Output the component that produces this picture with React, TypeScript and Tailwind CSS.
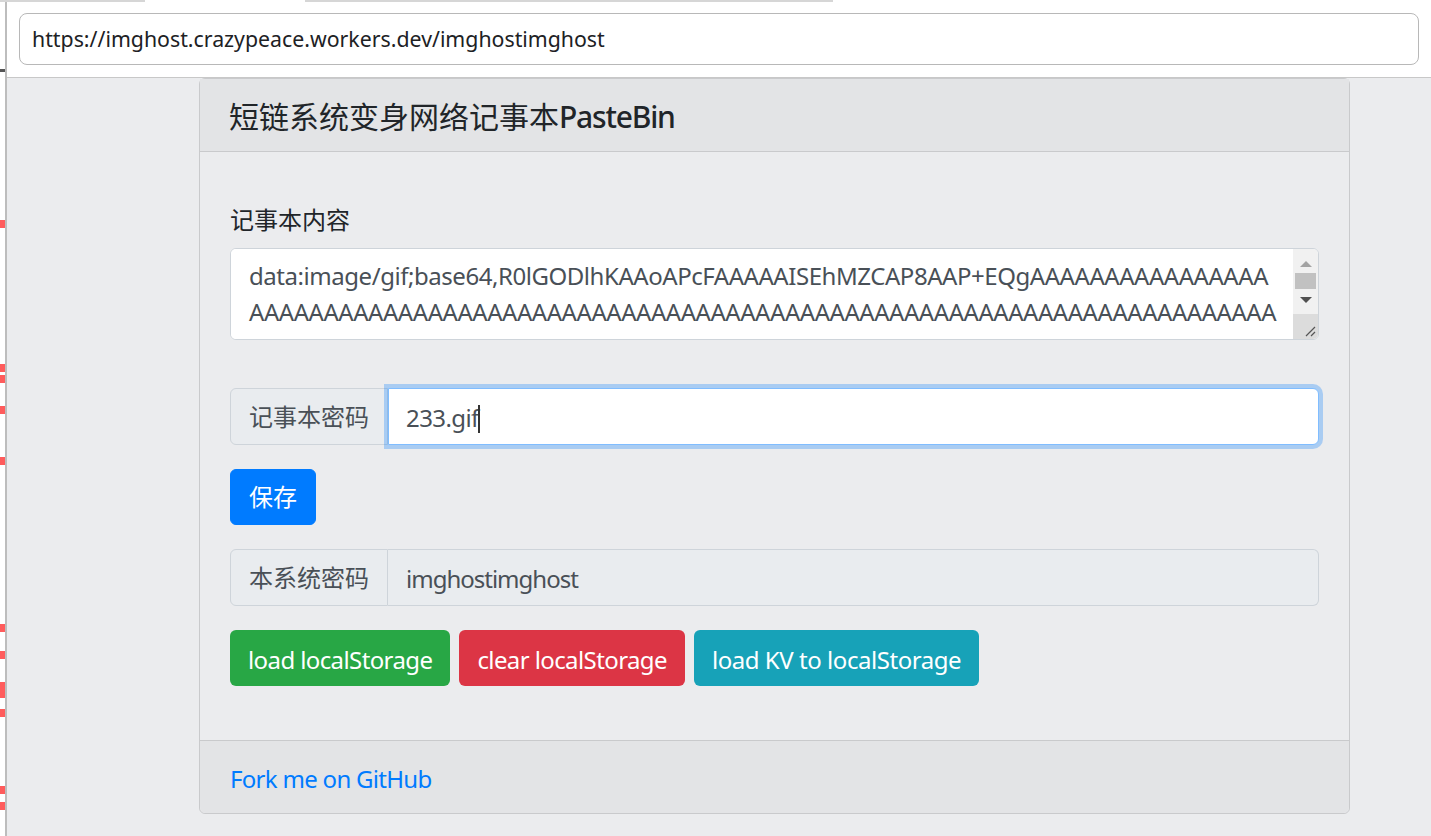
import React from 'react';

const font = { fontFamily: '"Noto Sans", "Noto Sans CJK SC", sans-serif' };

const redMarks = [220, 364, 375, 406, 457, 624, 651, 682, 690, 709, 786, 802];

const line1 = 'data:image/gif;base64,R0lGODlhKAAoAPcFAAAAAISEhMZCAP8AAP+EQgAAAAAAAAAAAAAAAA';
const line2 = 'A'.repeat(69);

function Scrollbar() {
  return (
    <div className="flex w-[25px] flex-col bg-[#f1f1f1]">
      <div className="flex h-[22px] items-end justify-center pb-[4px]">
        <div className="h-0 w-0 border-x-[6px] border-b-[6px] border-x-transparent border-b-[#a3a3a3]" />
      </div>
      <div className="mx-[2px] mt-[2px] h-[16px] bg-[#c1c1c1]" />
      <div className="flex h-[22px] items-center justify-center">
        <div className="h-0 w-0 border-x-[6px] border-t-[6px] border-x-transparent border-t-[#505050]" />
      </div>
      <div className="flex-1" />
      <div className="relative h-[25px] bg-[#dcdcdc]">
        <svg className="absolute right-[2px] bottom-[2px]" width="12" height="12" viewBox="0 0 12 12">
          <path d="M11 2 L2 11 M11 7 L7 11" stroke="#555" strokeWidth="1.2" fill="none" />
        </svg>
      </div>
    </div>
  );
}

export default function App() {
  return (
    <div className="relative flex h-[836px] w-[1431px] overflow-hidden bg-white text-[#212529]" style={font}>
      {/* left strip with marks */}
      <div className="relative w-[5px] bg-white">
        <div className="absolute top-[69px] left-0 h-[3px] w-[5px] bg-[#555]" />
        {redMarks.map((y) => (
          <div key={y} className="absolute left-0 h-[8px] w-[5px] bg-[#ff5c5c]" style={{ top: y }} />
        ))}
      </div>
      <div className="w-[2px] bg-[#bdbdbd]" />

      <div className="flex flex-1 flex-col">
        {/* address bar */}
        <div className="relative flex h-[78px] flex-col border-b border-[#c8c8c8] bg-white">
          <div className="absolute top-0 left-[-7px] h-[2px] w-[145px] bg-[#d6d6d6]" />
          <div className="absolute top-0 left-[298px] h-[2px] w-[528px] bg-[#d6d6d6]" />
          <div className="mt-[13px] ml-[12px] flex h-[52px] w-[1400px] items-center rounded-[8px] border border-[#b8b8b8] px-[12px] text-[21.3px] text-[#202124]">
            https://imghost.crazypeace.workers.dev/imghostimghost
          </div>
        </div>

        {/* page */}
        <div className="flex-1 bg-[#ebecee]">
          <div className="ml-[192px] w-[1151px] rounded-[6px] border border-[#c9cacc]">
            <div className="border-b border-[#c9cacc] bg-[#e3e4e6] px-[29px] pt-[20px] pb-[16px] text-[30px] leading-[36px]">
              短链系统变身网络记事本<span className="font-medium tracking-[-1.2px]">PasteBin</span>
            </div>

            <div className="flex flex-col px-[30px] pt-[50px] pb-[54px]">
              <label className="mb-[10px] text-[24px] leading-[36px]">记事本内容</label>
              <div className="flex h-[92px] overflow-hidden rounded-[6px] border border-[#ced4da] bg-white">
                <textarea
                  readOnly
                  wrap="off"
                  value={line1 + '\n' + line2}
                  className="flex-1 resize-none overflow-hidden bg-white pt-[9px] pb-[7px] pl-[18px] text-[24px] leading-[36px] tracking-[-0.45px] text-[#495057] outline-none"
                  style={font}
                />
                <Scrollbar />
              </div>

              <div className="mt-[48px] flex h-[57px]">
                <div className="flex items-center rounded-l-[6px] border border-[#ced4da] bg-[#e9ecef] px-[18px] text-[24px] text-[#495057]">
                  记事本密码
                </div>
                <div className="relative flex flex-1">
                  <input
                    readOnly
                    value="233.gif"
                    className="flex-1 rounded-r-[6px] border border-[#80bdff] bg-white pt-[3px] pl-[17px] text-[24px] tracking-[-0.6px] text-[#495057] shadow-[0_0_0_4px_rgba(0,123,255,0.28)] outline-none"
                    style={font}
                  />
                  <div className="absolute top-[17px] left-[90px] h-[28px] w-[2px] bg-[#333]" />
                </div>
              </div>

              <div className="mt-[24px] flex">
                <button className="h-[56px] rounded-[6px] border border-[#007bff] bg-[#007bff] px-[18px] text-[24px] text-white">
                  保存
                </button>
              </div>

              <div className="mt-[24px] flex h-[57px]">
                <div className="flex items-center rounded-l-[6px] border border-[#ced4da] bg-[#e9ecef] px-[18px] text-[24px] text-[#495057]">
                  本系统密码
                </div>
                <input
                  readOnly
                  value="imghostimghost"
                  className="flex-1 rounded-r-[6px] border border-l-0 border-[#ced4da] bg-[#e9ecef] pt-[3px] pl-[18px] text-[24px] tracking-[-1px] text-[#495057] outline-none"
                  style={font}
                />
              </div>

              <div className="mt-[24px] flex gap-[9px]">
                <button className="h-[56px] rounded-[6px] bg-[#28a745] px-[18px] pt-[3px] text-[24px] tracking-[-0.6px] text-white">
                  load localStorage
                </button>
                <button className="h-[56px] rounded-[6px] bg-[#dc3545] px-[18px] pt-[3px] text-[24px] tracking-[-0.6px] text-white">
                  clear localStorage
                </button>
                <button className="h-[56px] rounded-[6px] bg-[#17a2b8] px-[18px] pt-[3px] text-[24px] tracking-[-0.45px] text-white">
                  load KV to localStorage
                </button>
              </div>
            </div>

            <div className="rounded-b-[6px] border-t border-[#c9cacc] bg-[#e3e4e6] px-[30px] pt-[20px] pb-[16px] text-[24px] leading-[36px]">
              <a href="#" className="tracking-[-0.7px] text-[#007bff]">
                Fork me on GitHub
              </a>
            </div>
          </div>
        </div>
      </div>
    </div>
  );
}
